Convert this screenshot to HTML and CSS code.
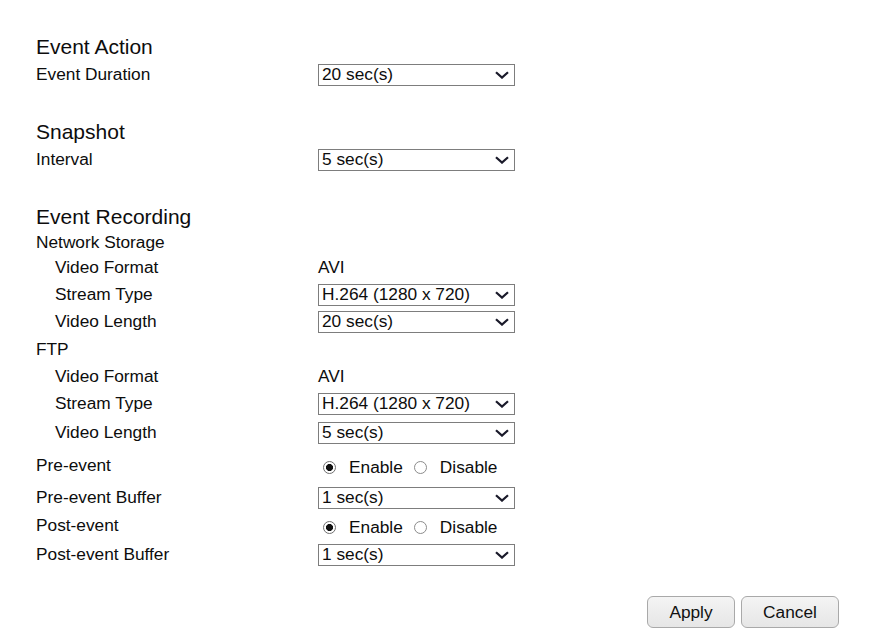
FILE: index.html
```html
<!DOCTYPE html>
<html>
<head>
<meta charset="utf-8">
<link rel="stylesheet" href="styles.css">
</head>
<body>
<form class="page">
  <section class="group">
    <div class="heading">Event Action</div>
    <div class="row r30">
      <span class="label">Event Duration</span>
      <div class="select"><span>20 sec(s)</span><svg class="chev" viewBox="0 0 14 8"><path d="M1 1.2 L7 6.6 L13 1.2"/></svg></div>
    </div>
  </section>

  <section class="group">
    <div class="heading">Snapshot</div>
    <div class="row r30">
      <span class="label">Interval</span>
      <div class="select"><span>5 sec(s)</span><svg class="chev" viewBox="0 0 14 8"><path d="M1 1.2 L7 6.6 L13 1.2"/></svg></div>
    </div>
  </section>

  <section class="group">
    <div class="heading">Event Recording</div>
    <div class="row r25"><span class="label">Network Storage</span></div>
    <div class="row r26">
      <span class="label sub">Video Format</span>
      <span class="value">AVI</span>
    </div>
    <div class="row r27">
      <span class="label sub">Stream Type</span>
      <div class="select"><span>H.264 (1280 x 720)</span><svg class="chev" viewBox="0 0 14 8"><path d="M1 1.2 L7 6.6 L13 1.2"/></svg></div>
    </div>
    <div class="row r28">
      <span class="label sub">Video Length</span>
      <div class="select"><span>20 sec(s)</span><svg class="chev" viewBox="0 0 14 8"><path d="M1 1.2 L7 6.6 L13 1.2"/></svg></div>
    </div>
    <div class="row r28"><span class="label">FTP</span></div>
    <div class="row r26">
      <span class="label sub">Video Format</span>
      <span class="value">AVI</span>
    </div>
    <div class="row r28">
      <span class="label sub">Stream Type</span>
      <div class="select"><span>H.264 (1280 x 720)</span><svg class="chev" viewBox="0 0 14 8"><path d="M1 1.2 L7 6.6 L13 1.2"/></svg></div>
    </div>
    <div class="row r30">
      <span class="label sub">Video Length</span>
      <div class="select"><span>5 sec(s)</span><svg class="chev" viewBox="0 0 14 8"><path d="M1 1.2 L7 6.6 L13 1.2"/></svg></div>
    </div>
    <div class="row r36">
      <span class="label">Pre-event</span>
      <div class="radios">
        <label class="radio"><span class="dot on"></span>Enable</label>
        <label class="radio"><span class="dot"></span>Disable</label>
      </div>
    </div>
    <div class="row r28">
      <span class="label">Pre-event Buffer</span>
      <div class="select"><span>1 sec(s)</span><svg class="chev" viewBox="0 0 14 8"><path d="M1 1.2 L7 6.6 L13 1.2"/></svg></div>
    </div>
    <div class="row r28">
      <span class="label">Post-event</span>
      <div class="radios">
        <label class="radio"><span class="dot on"></span>Enable</label>
        <label class="radio"><span class="dot"></span>Disable</label>
      </div>
    </div>
    <div class="row r30">
      <span class="label">Post-event Buffer</span>
      <div class="select"><span>1 sec(s)</span><svg class="chev" viewBox="0 0 14 8"><path d="M1 1.2 L7 6.6 L13 1.2"/></svg></div>
    </div>
  </section>

  <div class="actions">
    <button type="button" class="btn apply">Apply</button>
    <button type="button" class="btn cancel">Cancel</button>
  </div>
</form>
</body>
</html>
```

FILE: styles.css
```css
* { box-sizing: border-box; }
html, body { margin: 0; padding: 0; background: #fff; }
body {
  font-family: "Liberation Sans", Arial, sans-serif;
  color: #0d0d0d;
  font-size: 17.3px;
}
.page {
  padding: 32px 0 0 36px;
  width: 893px;
}
.group { display: flex; flex-direction: column; }
.group + .group { margin-top: 27px; }
.heading {
  height: 28px;
  display: flex;
  align-items: center;
  font-size: 21px;
  line-height: 1;
}
.row {
  display: flex;
  align-items: center;
  height: 28px;
}
.r25 { height: 25px; }
.r26 { height: 26px; }
.r27 { height: 27px; }
.r28 { height: 28px; }
.r30 { height: 30px; }
.r36 { height: 36px; }
.label {
  width: 282px;
  flex: none;
  line-height: 1;
}
.label.sub { padding-left: 19px; }
.value { line-height: 1; }
.select {
  width: 197px;
  height: 22px;
  border: 1px solid #7d7d7d;
  background: #fff;
  display: flex;
  align-items: center;
  justify-content: space-between;
  padding: 0 5px 0 3px;
  line-height: 1;
}
.chev {
  width: 14px;
  height: 8px;
  fill: none;
  stroke: #1a1a2a;
  stroke-width: 2.2;
}
.radios {
  display: flex;
  align-items: center;
  padding-left: 5px;
  padding-top: 3px;
}
.radio {
  display: flex;
  align-items: center;
  line-height: 1;
  margin-right: 11px;
}
.dot {
  width: 13px;
  height: 13px;
  border-radius: 50%;
  border: 1px solid #6f6f6f;
  background: #fff;
  margin-right: 13px;
}
.dot:not(.on) { border-color: #8c8c8c; }
.dot.on {
  background: radial-gradient(circle, #111 0, #111 3.3px, #fff 3.8px);
}
.actions {
  display: flex;
  justify-content: flex-end;
  gap: 6px;
  margin-top: 26px;
  padding-right: 54px;
}
.btn {
  height: 32px;
  border: 1px solid #a9a9a9;
  border-radius: 6px;
  background: linear-gradient(#f4f4f4, #e6e6e6);
  font-family: "Liberation Sans", Arial, sans-serif;
  font-size: 17.3px;
  color: #111;
  padding: 0;
}
.apply { width: 88px; }
.cancel { width: 98px; }
```
